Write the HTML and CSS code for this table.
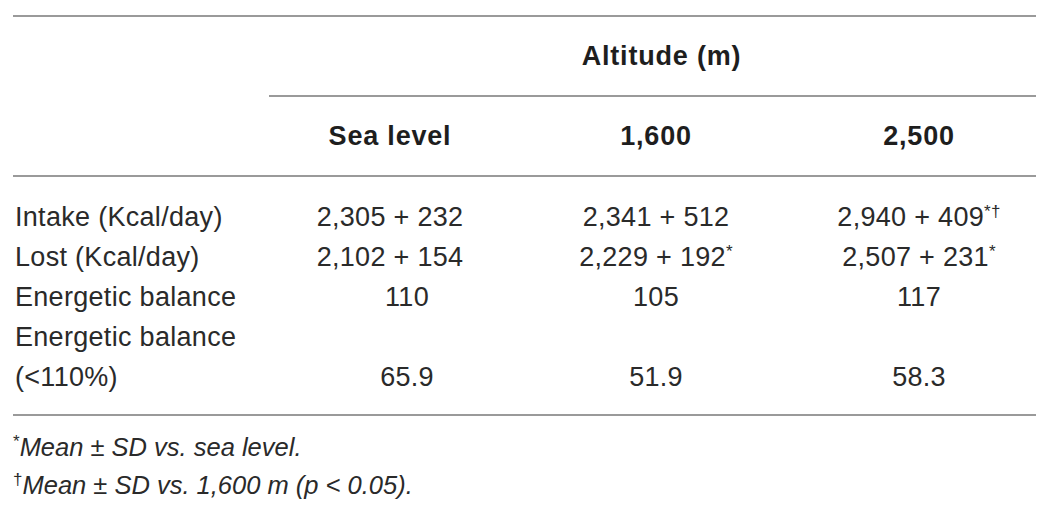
FILE: index.html
```html
<!DOCTYPE HTML>
<html>
<head>
  <meta name="viewport" content="width=device-width, initial-scale=1">
  <link rel="icon" href="data:,">
  <link rel="stylesheet" href="styles.css">
</head>
<body>
  <div class="wrap">
    <table class="data">
      <colgroup>
        <col class="c-label">
        <col class="c-val">
        <col class="c-val">
        <col class="c-last">
      </colgroup>
      <thead>
        <tr class="group">
          <th></th>
          <th colspan="3" class="span">Altitude (m)</th>
        </tr>
        <tr class="heads">
          <th></th>
          <th class="v1">Sea level</th>
          <th class="v2">1,600</th>
          <th class="v3">2,500</th>
        </tr>
      </thead>
      <tbody>
        <tr class="first">
          <td class="lbl">Intake (Kcal/day)</td>
          <td class="v1">2,305 + 232</td>
          <td class="v2">2,341 + 512</td>
          <td class="v3">2,940 + 409<sup>*†</sup></td>
        </tr>
        <tr>
          <td class="lbl">Lost (Kcal/day)</td>
          <td class="v1">2,102 + 154</td>
          <td class="v2">2,229 + 192<sup>*</sup></td>
          <td class="v3">2,507 + 231<sup>*</sup></td>
        </tr>
        <tr>
          <td class="lbl">Energetic balance</td>
          <td class="v1 nudge">110</td>
          <td class="v2">105</td>
          <td class="v3">117</td>
        </tr>
        <tr>
          <td class="lbl">Energetic balance</td>
          <td></td>
          <td></td>
          <td></td>
        </tr>
        <tr class="last">
          <td class="lbl">(&lt;110%)</td>
          <td class="v1 nudge">65.9</td>
          <td class="v2">51.9</td>
          <td class="v3">58.3</td>
        </tr>
      </tbody>
    </table>
    <div class="notes">
      <p><sup>*</sup>Mean ± SD vs. sea level.</p>
      <p><sup>†</sup>Mean ± SD vs. 1,600 m (p &lt; 0.05).</p>
    </div>
  </div>
</body>
</html>
```

FILE: styles.css
```css
html {font-family: "Liberation Sans", Arial, sans-serif; color: #2a2a2a;}
body {margin: 0; background: #fff;}
.wrap {padding: 15px 0 0 13px; width: 1023px;}

.data {width: 1023px; border-collapse: collapse; table-layout: fixed; font-size: 27px; letter-spacing: 0.3px; border-top: 2px solid #9a9a9a; border-bottom: 2px solid #9a9a9a;}
.c-label {width: 256px;}
.c-val {width: 256px;}
.c-last {width: 255px;}

.data th, .data td {padding: 0; text-align: center; white-space: nowrap;}
.data td.lbl {text-align: left; padding-left: 2px;}

.group th {height: 78px; font-weight: bold; letter-spacing: 0.8px; color: #1e1e1e;}
.group th.span {border-bottom: 2px solid #9a9a9a; padding-left: 18px;}
.heads th {height: 78px; font-weight: bold; letter-spacing: 0.8px; color: #1e1e1e; border-bottom: 2px solid #9a9a9a;}

.data td {height: 40px; line-height: 40px;}
.data tr.first td {height: 60px; padding-top: 20px; box-sizing: border-box;}
.data tr.last td {height: 57px; padding-bottom: 17px; box-sizing: border-box;}

.v1 {padding-right: 14px !important;}
.v2 {padding-left: 6px !important;}
.v3 {padding-left: 21px !important;}
.v1.nudge {padding-right: 0 !important; padding-left: 20px !important;}

.data sup {font-size: 17px; line-height: 0; vertical-align: 9px;}

.notes {margin-top: 12px;}
.notes p {margin: 0; font-size: 25.5px; line-height: 38px; font-style: italic;}
.notes sup {font-size: 17px; line-height: 0; vertical-align: 9px; font-style: normal;}
```
